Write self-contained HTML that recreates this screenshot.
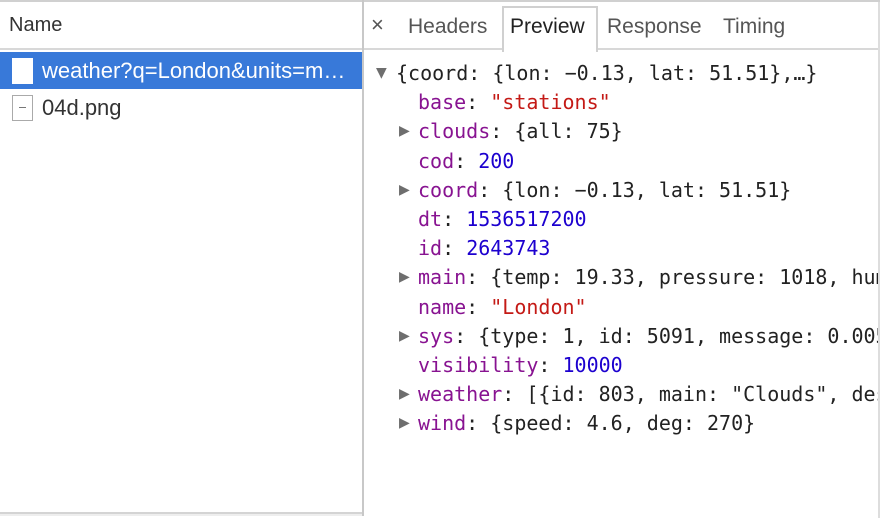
<!DOCTYPE html>
<html><head><meta charset="utf-8"><style>
*{margin:0;padding:0;box-sizing:border-box}
body{width:880px;height:516px;overflow:hidden;background:#fff;font-family:"Liberation Sans",Helvetica,sans-serif;position:relative}
.left{position:absolute;left:0;top:0;width:362px;height:516px;border-top:2px solid #d0d0d0}
.hdr{height:48px;border-bottom:2px solid #d8d8d8;font-size:20px;color:#333;padding:12px 0 0 9px}
.row{height:37px;font-size:22px;display:flex;align-items:center;padding-left:12px;white-space:nowrap}
.sel{background:#3879d9;color:#fff;margin-top:2px}
.ic{width:21px;height:26px;border:1px solid #aaa;background:#fff;margin-right:9px;position:relative;flex:none}
.sel .ic{border:1px solid #fff}
.lb{position:absolute;left:0;bottom:0;width:362px;height:4px;border-top:2px solid #d4d4d4;background:#eee}
.div{position:absolute;left:362px;top:0;width:2px;height:516px;background:#c8c8c8}
.right{position:absolute;left:364px;top:0;right:0;height:516px;border-top:2px solid #d0d0d0}
.tabs{height:48px;border-bottom:2px solid #d8d8d8;position:relative;font-size:21px;color:#555}
.tabs span{position:absolute;top:13px}
.prev{position:absolute;left:138px;top:4px;width:96px;height:46px;border:2px solid #d0d0d0;border-bottom:none;background:#fff}
.code{position:absolute;left:0;top:57px;right:2px;font-family:"DejaVu Sans Mono",monospace;font-size:20px;color:#222;overflow:hidden}
.l{height:29.2px;line-height:29.2px;position:relative;white-space:pre}
.k{color:#881391}.s{color:#c41a16}.n{color:#1c00cf}
.t{position:absolute;font-size:14px;color:#6e6e6e;font-family:"DejaVu Sans",sans-serif}
.rb{position:absolute;right:0;top:0;width:2px;height:516px;background:#ddd}
</style></head><body>
<div class="left">
<div class="hdr">Name</div>
<div class="row sel"><div class="ic"></div>weather?q=London&amp;units=m…</div>
<div class="row" style="color:#333"><div class="ic"><div style="position:absolute;left:6px;top:11px;width:7px;height:1px;background:#777"></div></div>04d.png</div>
<div class="lb"></div>
</div>
<div class="div"></div>
<div class="right">
<div class="tabs">
<div class="prev"></div>
<span style="left:7px;top:10px;font-size:22px;color:#555">×</span>
<span style="left:44px">Headers</span>
<span style="left:146px;color:#222">Preview</span>
<span style="left:243px">Response</span>
<span style="left:359px">Timing</span>
</div>
<div class="code">
<div class="l" style="padding-left:32px"><span class="t" style="left:12px">▼</span>{coord: {lon: −0.13, lat: 51.51},…}</div>
<div class="l" style="padding-left:54px"><span class="k">base</span>: <span class="s">"stations"</span></div>
<div class="l" style="padding-left:54px"><span class="t" style="left:35px">▶</span><span class="k">clouds</span>: {all: 75}</div>
<div class="l" style="padding-left:54px"><span class="k">cod</span>: <span class="n">200</span></div>
<div class="l" style="padding-left:54px"><span class="t" style="left:35px">▶</span><span class="k">coord</span>: {lon: −0.13, lat: 51.51}</div>
<div class="l" style="padding-left:54px"><span class="k">dt</span>: <span class="n">1536517200</span></div>
<div class="l" style="padding-left:54px"><span class="k">id</span>: <span class="n">2643743</span></div>
<div class="l" style="padding-left:54px"><span class="t" style="left:35px">▶</span><span class="k">main</span>: {temp: 19.33, pressure: 1018, humidity: 77}</div>
<div class="l" style="padding-left:54px"><span class="k">name</span>: <span class="s">"London"</span></div>
<div class="l" style="padding-left:54px"><span class="t" style="left:35px">▶</span><span class="k">sys</span>: {type: 1, id: 5091, message: 0.0051}</div>
<div class="l" style="padding-left:54px"><span class="k">visibility</span>: <span class="n">10000</span></div>
<div class="l" style="padding-left:54px"><span class="t" style="left:35px">▶</span><span class="k">weather</span>: [{id: 803, main: "Clouds", description: ""}]</div>
<div class="l" style="padding-left:54px"><span class="t" style="left:35px">▶</span><span class="k">wind</span>: {speed: 4.6, deg: 270}</div>
</div>
<div class="rb"></div>
</div>
</body></html>
